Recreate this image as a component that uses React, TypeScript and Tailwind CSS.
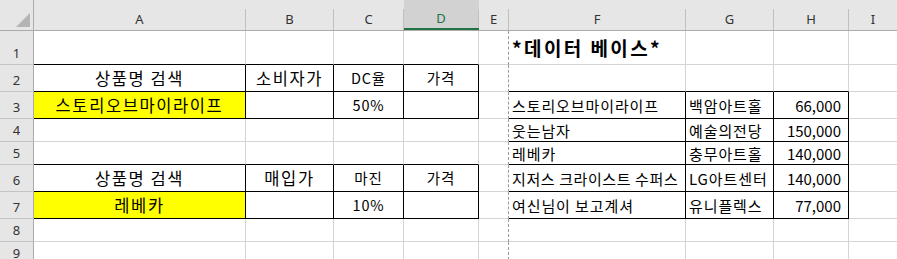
import React from 'react';

type Edge = 'k' | 'g' | 'd';

interface Cell {
  text?: string;
  align?: 'c' | 'l' | 'r';
  size?: 'big' | 'mid' | 'data' | 'num' | 'title' | 'tight';
  bg?: boolean;
  r?: Edge;
  b?: Edge;
}

const colWidths = [
  'w-[212px]',
  'w-[88px]',
  'w-[70px]',
  'w-[75px]',
  'w-[30px]',
  'w-[177px]',
  'w-[88px]',
  'w-[75px]',
  'w-[49px]',
];

const letters = ['A', 'B', 'C', 'D', 'E', 'F', 'G', 'H', 'I'];

const rowHeights = [
  'h-[34px]',
  'h-[27px]',
  'h-[27px]',
  'h-[23px]',
  'h-[23px]',
  'h-[27px]',
  'h-[27px]',
  'h-[23px]',
  'h-[23px]',
];

// black-boxed data rows
const boxed = (text: string, align: 'c' | 'l' | 'r', size: Cell['size']): Cell => ({
  text,
  align,
  size,
  r: 'k',
  b: 'k',
});

const sheet: Cell[][] = [
  // row 1
  [
    { b: 'k' },
    { b: 'k' },
    { b: 'k' },
    { b: 'k' },
    {},
    { text: '*데이터 베이스*', align: 'l', size: 'title' },
    {},
    {},
    {},
  ],
  // row 2
  [
    boxed('상품명 검색', 'c', 'big'),
    boxed('소비자가', 'c', 'big'),
    boxed('DC율', 'c', 'mid'),
    boxed('가격', 'c', 'mid'),
    {},
    { b: 'k' },
    { b: 'k' },
    { b: 'k' },
    {},
  ],
  // row 3
  [
    { ...boxed('스토리오브마이라이프', 'c', 'big'), bg: true },
    boxed('', 'c', 'big'),
    boxed('50%', 'c', 'mid'),
    boxed('', 'c', 'mid'),
    {},
    boxed('스토리오브마이라이프', 'l', 'data'),
    boxed('백암아트홀', 'l', 'data'),
    boxed('66,000', 'r', 'num'),
    {},
  ],
  // row 4
  [
    {},
    {},
    {},
    {},
    {},
    boxed('웃는남자', 'l', 'data'),
    boxed('예술의전당', 'l', 'data'),
    boxed('150,000', 'r', 'num'),
    {},
  ],
  // row 5
  [
    { b: 'k' },
    { b: 'k' },
    { b: 'k' },
    { b: 'k' },
    {},
    boxed('레베카', 'l', 'data'),
    boxed('충무아트홀', 'l', 'data'),
    boxed('140,000', 'r', 'num'),
    {},
  ],
  // row 6
  [
    boxed('상품명 검색', 'c', 'big'),
    boxed('매입가', 'c', 'big'),
    boxed('마진', 'c', 'mid'),
    boxed('가격', 'c', 'mid'),
    {},
    boxed('지저스 크라이스트 수퍼스', 'l', 'tight'),
    { ...boxed('LG아트센터', 'l', 'data'), align: 'l' },
    boxed('140,000', 'r', 'num'),
    {},
  ],
  // row 7
  [
    { ...boxed('레베카', 'c', 'big'), bg: true },
    boxed('', 'c', 'big'),
    boxed('10%', 'c', 'mid'),
    boxed('', 'c', 'mid'),
    {},
    boxed('여신님이 보고계셔', 'l', 'data'),
    boxed('유니플렉스', 'l', 'data'),
    boxed('77,000', 'r', 'num'),
    {},
  ],
  // rows 8, 9
  [{}, {}, {}, {}, {}, {}, {}, {}, {}],
  [{}, {}, {}, {}, {}, {}, {}, {}, {}],
];

const rightEdge: Record<Edge, string> = {
  k: 'border-r border-r-black',
  g: 'border-r border-r-[#d4d4d4]',
  d: 'border-r border-r-[#9a9a9a] [border-right-style:dashed]',
};

const bottomEdge: Record<Edge, string> = {
  k: 'border-b border-b-black',
  g: 'border-b border-b-[#d4d4d4]',
  d: 'border-b border-b-[#d4d4d4]',
};

const sizeClass = {
  big: 'text-[16.5px] tracking-[1.6px]',
  mid: 'text-[14.5px] tracking-[0.8px]',
  data: 'text-[15px] tracking-[0.9px]',
  tight: 'text-[15px] tracking-[0.6px]',
  num: 'text-[15px]',
  title: 'text-[19px] font-bold tracking-[2.4px] overflow-visible',
};

const alignClass = {
  c: 'justify-center',
  l: 'justify-start pl-[3px]',
  r: 'justify-end pr-[7px]',
};

function SheetCell({ cell, col }: { cell: Cell; col: number }) {
  const r: Edge = col === 4 ? 'd' : cell.r ?? 'g';
  const b: Edge = cell.b ?? 'g';
  return (
    <div
      className={[
        'flex items-center shrink-0 h-full whitespace-nowrap overflow-hidden leading-none text-black',
        colWidths[col],
        rightEdge[r],
        bottomEdge[b],
        cell.bg ? 'bg-[#ffff00]' : 'bg-white',
        alignClass[cell.align ?? 'c'],
        sizeClass[cell.size ?? 'data'],
      ].join(' ')}
    >
      {cell.text}
    </div>
  );
}

export default function App() {
  return (
    <div className="w-[897px] h-[259px] overflow-hidden bg-white font-['Noto_Sans_CJK_KR',sans-serif]">
      {/* column header */}
      <div className="flex h-[31px] bg-[#e6e6e6] border-b border-b-[#ababab]">
        <div className="relative w-[34px] shrink-0 border-r border-r-[#ababab]">
          <svg className="absolute left-0 top-0" width="33" height="30" viewBox="0 0 33 30">
            <polygon points="30,13 30,27 16,27" fill="#b4b4b4" />
          </svg>
        </div>
        {letters.map((l, i) => (
          <div
            key={l}
            className={[
              'shrink-0 flex flex-col',
              colWidths[i],
              l === 'D' ? 'bg-[#d2d2d2]' : '',
            ].join(' ')}
          >
            <div className="mt-[9px] flex-1 flex items-center justify-center border-r border-r-[#c0c0c0] font-['Noto_Sans',sans-serif] text-[13px] leading-none">
              <span className={l === 'D' ? 'text-[#217346]' : 'text-[#333]'}>{l}</span>
            </div>
            {l === 'D' && <div className="h-[2px] bg-[#217346]" />}
          </div>
        ))}
      </div>

      {sheet.map((row, ri) => (
        <div key={ri} className={['flex', rowHeights[ri]].join(' ')}>
          <div className="w-[34px] shrink-0 flex items-end justify-center pb-[4px] bg-[#e6e6e6] border-r border-r-[#ababab] border-b border-b-[#c4c4c4] font-['Noto_Sans',sans-serif] text-[13px] leading-none text-[#333]">
            {ri + 1}
          </div>
          {row.map((cell, ci) => (
            <SheetCell key={ci} cell={cell} col={ci} />
          ))}
        </div>
      ))}
    </div>
  );
}
